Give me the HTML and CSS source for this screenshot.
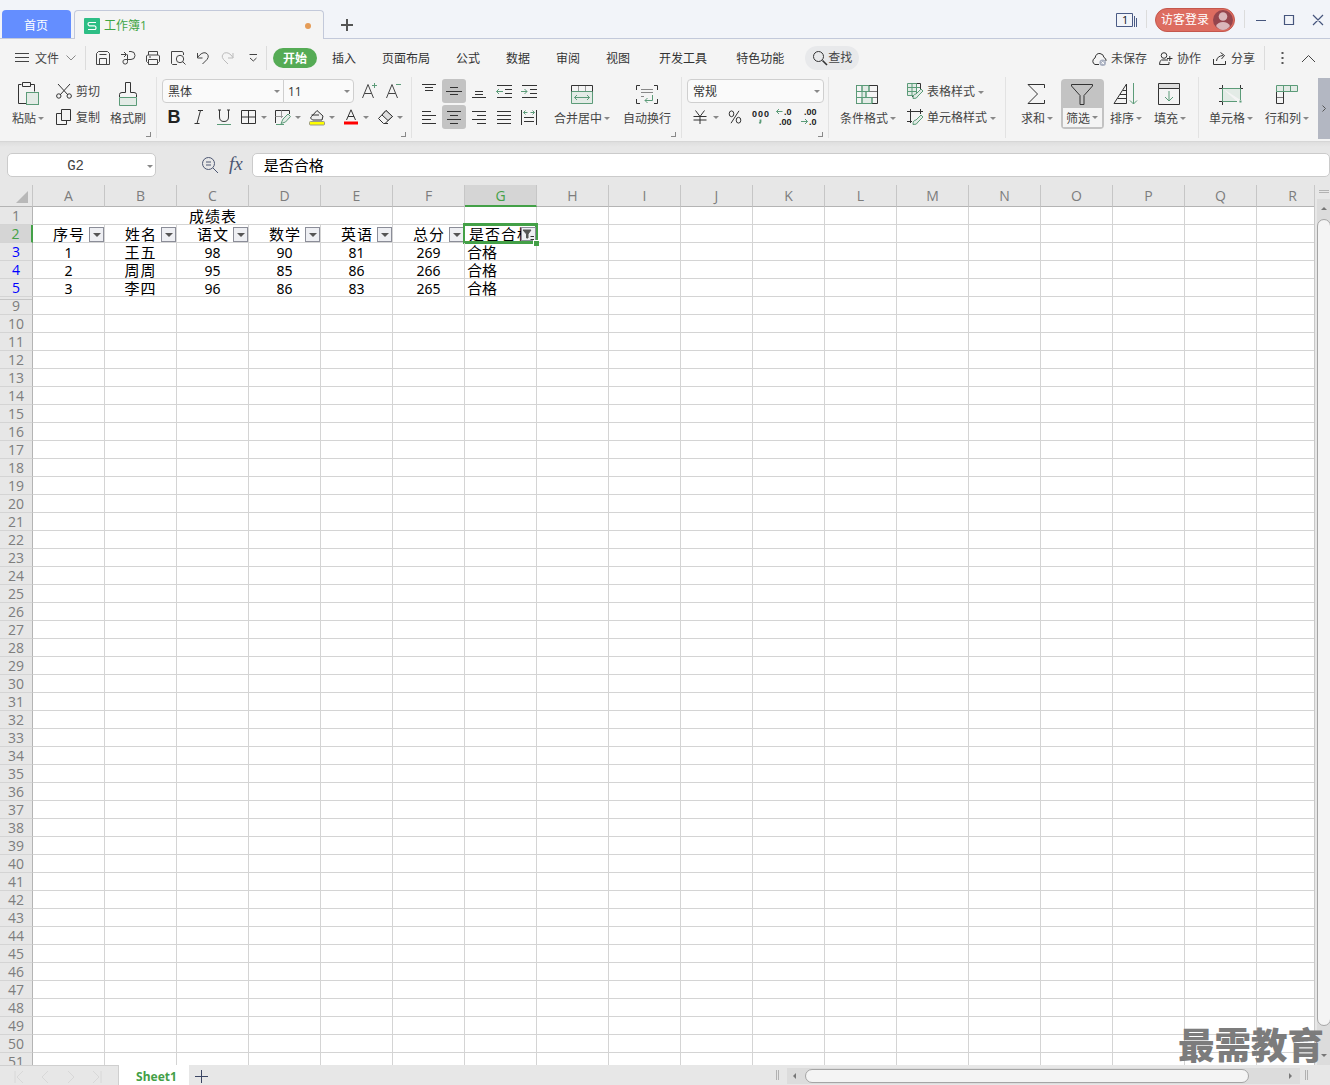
FILE: index.html
```html
<!DOCTYPE html>
<html lang="zh-CN">
<head>
  <meta charset="UTF-8" />
  <title>工作簿1</title>
  <meta name="viewport" content="width=device-width, initial-scale=1" />
  <link rel="stylesheet" href="styles.css">
</head>
<body>

<header class="titlebar">
  <div class="home-tab">首页</div>
  <div class="doc-tab">
    <svg width="16" height="16"><rect width="16" height="16" rx="1" fill="#2dbe85"/><path d="M12 4.5H5.5Q4 4.5 4 6T5.5 7.8H10.5Q12 7.8 12 9.7T10.5 11.5H4" stroke="#fff" stroke-width="1.2"/></svg>
    <span>工作簿1</span>
    <i class="unsaved"></i>
  </div>
  <svg class="new-tab" width="12" height="12"><path d="M6 0V12M0 6H12" stroke="#555" stroke-width="2"/></svg>
  <div class="window-tools">
    <svg class="win-count" width="22" height="14"><path d="M.5.5H16.500V13.500H.5ZM18.500 3V14M20.500 5V14" stroke="#4a5a85"/><text x="6" y="11" font-size="11">1</text></svg>
    <i class="sep short"></i>
    <div class="login">访客登录
      <svg width="20" height="20"><circle cx="10" cy="10" r="10" fill="#95454d"/><circle cx="10" cy="6.500" r="4.300" fill="#d9b6ba"/><path d="M3 16Q5 12 10 12T17 16Q14 20 10 20T3 16Z" fill="#d9b6ba"/></svg>
    </div>
    <i class="sep short"></i>
    <svg class="win-btns" width="68" height="12"><path d="M0 6.500H10M28.500 1.500H37.500V10.500H28.500ZM57 1L67 11M67 1L57 11" stroke="#46557d" stroke-width="1.200"/></svg>
  </div>
</header>

<nav class="menubar">
  <svg class="burger" width="14" height="10"><path d="M0 .5H14M0 4.500H14M0 8.500H14" stroke="#444"/></svg>
  <span class="file">文件</span>
  <svg width="10" height="6"><path d="M.5.5L5 5L9.500.5" stroke="#888"/></svg>
  <i class="sep"></i>
  <div class="quick">
    <svg width="16" height="16"><path d="M1.500 14.500V3.500L3.500 1.500H12.500L14.500 3.500V14.500ZM4.500 4.500H11.500M4.500 14.500V8.500H11.500V14.500"/></svg>
    <svg width="16" height="16"><path d="M1 4.500H6M4 2L6.500 4.500L4 7M9 1.500H11A3.800 3.800 0 0 1 11 9.500H7.500V4.500M7.500 9.500V11.500A2.300 2.300 0 1 1 5 9.500H7.500"/></svg>
    <svg width="16" height="16"><path d="M3.500 5V1.500H12.500V5M3.500 12.500H2.500L1.500 11.500V6L2.500 5H13.500L14.500 6V11.500L13.500 12.500H12.500M3.500 9.500H12.500V14.500H3.500ZM4 7H6"/></svg>
    <svg width="16" height="16"><path d="M7 14.500H2.500L1.500 13.500V1.500H12.500L13.500 3V5"/><circle cx="10" cy="9" r="3.700"/><path d="M12.500 11.500L15.500 14.500"/></svg>
    <svg width="16" height="16"><path d="M2.500 3V8H7.500M2.500 7.500Q7 1.500 11 3Q15 5.500 12 9.500L7.500 14"/></svg>
    <svg class="faded" width="16" height="16"><path d="M13 3V8H8M13 7.500Q9 1.500 4.500 3Q.5 5.500 3.500 9.500L8 14"/></svg>
    <svg width="16" height="16"><path d="M4.500 4.500H12M5 8L8.300 11L11.500 8"/></svg>
  </div>
  <i class="sep after-quick"></i>
  <div class="tabs">
    <span class="active">开始</span>
    <span>插入</span>
    <span>页面布局</span>
    <span>公式</span>
    <span>数据</span>
    <span>审阅</span>
    <span>视图</span>
    <span class="wide">开发工具</span>
    <span class="wide">特色功能</span>
  </div>
  <div class="search">
    <svg width="16" height="16"><circle cx="6.500" cy="6.500" r="5"/><path d="M10.500 10.500L15 15" stroke-width="1.600"/></svg>查找
  </div>
  <div class="share-tools">
    <span><svg width="16" height="16"><path d="M8 13.500H4A3.500 3.500 0 0 1 4 7Q5 2 9 2.500Q12.500 3 13 6.500Q15.500 7.500 15 10"/><circle cx="11.700" cy="11.700" r="3.300" fill="#a9b0c0" stroke="none"/><path d="M10.500 10.500L13 13M13 10.500L10.500 13" stroke="#fff"/></svg>未保存</span>
    <span><svg width="15" height="16"><circle cx="6" cy="4.500" r="2.800"/><path d="M10 9H3.500Q1.500 9.500 1.500 13.500H11V11M9 7.500H14.500M11.800 5V10"/></svg>协作</span>
    <span><svg width="15" height="16"><path d="M1.500 8V13.500H13.500V10M4.500 10Q5 5 11 4.500M8.500 1.500L12.500 4.500L9.500 8"/></svg>分享</span>
    <i class="sep"></i>
    <svg class="more" width="3" height="12"><path d="M.5 0H2.500V2H.5ZM.5 5H2.500V7H.5ZM.5 10H2.500V12H.5Z" fill="#555" stroke="none"/></svg>
    <svg width="15" height="9"><path d="M1 8L7.500 1.500L14 8" stroke="#444"/></svg>
  </div>
</nav>

<section class="ribbon">
  <div class="group clipboard">
    <div class="big">
      <svg width="22" height="24"><path d="M4.500 2.500H1.500V21.500H9M14 2.500H17.500V9.500M5.500.5H13.500V4.500H5.500Z"/><rect class="g f" x="9.500" y="10.500" width="12" height="12"/></svg>
      <span>粘贴<b class="caret"></b></span>
    </div>
    <div class="stack">
      <span><svg width="16" height="16"><path d="M2 1L12 12M14 1L4 12"/><circle cx="2.800" cy="13" r="2.200"/><circle cx="13.200" cy="13" r="2.200"/></svg>剪切</span>
      <span><svg width="16" height="16"><path d="M5.500.5H14.500V11.500H5.500ZM5.500 4.500H.5V15.500H10.500V11.500"/></svg>复制</span>
    </div>
    <div class="big">
      <svg width="20" height="24"><path class="g f" d="M1.500 15.500H18.500V23.500H1.500Z"/><path d="M1.500 15V12.500Q1.500 10.500 4 10.500H7.500V.5H12.500V10.500H16Q18.500 10.500 18.500 12.500V15"/></svg>
      <span>格式刷</span>
    </div>
    <i class="launcher"></i>
  </div>

  <div class="group font">
    <div class="line">
      <div class="select name">黑体<b class="caret"></b></div>
      <div class="select size">11<b class="caret"></b></div>
      <svg class="grow" width="17" height="18"><path d="M1.500 16L7 2.500L12.500 16M3.500 11.500H10.500" stroke="#444"/><path class="g" d="M13.500 1V6M11 3.500H16"/></svg>
      <svg class="shrink" width="17" height="18"><path d="M1.500 16L7 2.500L12.500 16M3.500 11.500H10.500" stroke="#444"/><path class="g" d="M11 2.500H16"/></svg>
    </div>
    <div class="line">
      <div class="tool bold">B</div>
      <div class="tool"><svg width="12" height="16"><path d="M5 1.500H10M7.500 1.500L4 14.500M1.500 14.500H6.500"/></svg></div>
      <div class="tool"><svg width="16" height="18"><path d="M3.500 2V9Q3.500 13.500 8 13.500T12.500 9V2M2 2H5M11 2H14"/><path class="g" d="M1 16.500H15"/></svg></div>
      <div class="drop"><svg width="16" height="16"><path d="M.5 1.500H14.500V14.500H.5ZM.5 8H14.500M7.500 1.500V14.500"/></svg><b class="caret"></b></div>
      <div class="drop"><svg width="16" height="16"><path d="M.5 14V1.500H14.500V5"/><path d="M.5 7.500H8M6.500 1.500V9" stroke="#999"/><path class="g f" d="M6 14.500L8 10L13 5L15.500 7.500L10.500 13Z"/><path class="g" d="M1 15.500H9"/></svg><b class="caret"></b></div>
      <div class="drop"><svg width="16" height="16"><path d="M2.500 7.500L8 1.500L14 7L13 11H3.500L1.500 9ZM2.500 6H10" fill="#eee"/><rect x=".5" y="12.500" width="15" height="3.500" rx="1" fill="#ff0" stroke="#998"/></svg><b class="caret"></b></div>
      <div class="drop"><svg width="16" height="16"><path d="M3.500 11L8 .8L12.500 11M5 7.500H11"/><path d="M1 12.500H15V15.500H1Z" fill="#f00" stroke="none"/></svg><b class="caret"></b></div>
      <div class="drop"><svg width="17" height="16"><path d="M1.500 9.500L9 1.500L15.500 7.500L8 14.500H6.500ZM8 14.500H11" /><path d="M5 6L9 1.500L15.500 7.500L11 11.500Z" fill="#ddd"/></svg><b class="caret"></b></div>
    </div>
    <i class="launcher"></i>
  </div>

  <div class="group align">
    <div class="rows">
      <div class="line">
        <div class="tool"><svg width="16" height="16"><path d="M1 1.500H15M4 4.500H12M4 7.500H12"/></svg></div>
        <div class="tool on"><svg width="16" height="16"><path d="M4 4.500H12M0 8.500H16M4 11.500H12"/></svg></div>
        <div class="tool"><svg width="16" height="16"><path d="M4 8.500H12M4 11.500H12M1 14.500H15"/></svg></div>
        <div class="tool"><svg width="16" height="16"><path d="M1 2.500H16M9 6.500H16M9 10.500H16M1 14.500H16"/><path class="g" d="M.5 8.500H7M3 6L.5 8.500L3 11"/></svg></div>
        <div class="tool"><svg width="16" height="16"><path d="M1 2.500H16M9 6.500H16M9 10.500H16M1 14.500H16"/><path class="g" d="M0 8.500H6M3.500 6L6 8.500L3.500 11"/></svg></div>
      </div>
      <div class="line">
        <div class="tool"><svg width="16" height="16"><path d="M1 2.500H10M1 6.500H15M1 10.500H10M1 14.500H15"/></svg></div>
        <div class="tool on"><svg width="16" height="16"><path d="M1 2.500H15M4 6.500H12M1 10.500H15M4 14.500H12" /></svg></div>
        <div class="tool"><svg width="16" height="16"><path d="M1 2.500H15M6 6.500H15M1 10.500H15M6 14.500H15"/></svg></div>
        <div class="tool"><svg width="16" height="16"><path d="M1 2.500H15M1 6.500H15M1 10.500H15M1 14.500H15"/></svg></div>
        <div class="tool"><svg width="16" height="16"><path d="M.5 1V16M15.500 1V16M3 8.500H13M3 12.500H13"/><path class="g" d="M2.500 3.500H6.500M4.500 1.500L2.500 3.500L4.500 5.500M9.500 3.500H13.500M11.500 1.500L13.500 3.500L11.500 5.500"/></svg></div>
      </div>
    </div>
    <div class="big merge">
      <svg width="22" height="24"><path class="g f" d="M.5 9.500H21.500V21.500H.5Z"/><path d="M.5 9.500V3.500H21.500V9.500"/><path d="M7.500 4V9M14.500 4V9" stroke="#999"/><path class="g" d="M3.500 15.500H18.500M6 13L3.500 15.500L6 18M16 13L18.500 15.500L16 18"/></svg>
      <span>合并居中<b class="caret"></b></span>
    </div>
    <div class="big wrap">
      <svg width="24" height="24"><path d="M5 3.500H1.500V8M19 3.500H22.500V8M1.500 17V21.500H5M22.500 17V21.500H19"/><path d="M6 7.500H18M6 10.500H18M6 14.500H9" stroke="#888"/><path class="g" d="M17.500 13V18.500H10M12.500 16L10 18.500L12.500 21"/></svg>
      <span>自动换行</span>
    </div>
    <i class="launcher"></i>
  </div>

  <div class="group number">
    <div class="line"><div class="select format">常规<b class="caret"></b></div></div>
    <div class="line">
      <div class="drop yen"><svg width="14" height="16"><path d="M2.500 1.500L7 7.500L11.500 1.500M.5 7.500H13.500M.5 11H13.500M7 7.500V15"/></svg><b class="caret"></b></div>
      <svg class="percent" width="14" height="14"><ellipse cx="3.500" cy="3.800" rx="2.300" ry="2.900"/><ellipse cx="10.500" cy="10.200" rx="2.300" ry="2.900"/><path d="M11 .8L3 13.200"/></svg>
      <svg class="thousand" width="18" height="16"><g class="num"><text x="0" y="8" textLength="17">000</text></g><path class="g" d="M8.500 10.500V13L7.500 14.500" stroke-width="1.800"/></svg>
      <svg class="dec" width="18" height="18"><g class="num"><text x="8" y="7">.0</text><text x="3" y="17">.00</text></g><path class="g" d="M.5 3.500H6.500M3 1L.5 3.500L3 6"/></svg>
      <svg class="dec" width="18" height="18"><g class="num"><text x="3" y="7">.00</text><text x="8" y="17">.0</text></g><path class="g" d="M0 13.500H6.500M4 11L6.500 13.500L4 16"/></svg>
    </div>
    <i class="launcher"></i>
  </div>

  <div class="group styles">
    <div class="big">
      <svg width="22" height="24"><path class="g f" d="M6 3.500H13V9.500H10V15.500H16V21.500H6Z"/><path d="M.5 3.500H21.500V21.500H.5Z"/><path class="g" d="M.5 21.500V3.500H13V9.500H.5M.5 15.500H16V21.500M6 3.500V9.500M10 9.500V15.500M6 15.500V21.500M.5 21.500H16"/><path d="M13 9.500H21M16 15.500H21" stroke="#777"/></svg>
      <span>条件格式<b class="caret"></b></span>
    </div>
    <div class="stack">
      <span><svg width="17" height="17"><path d="M8 .5H13.500V5M13.500 5V7M8 13.500H5"/><path class="g f" d="M.5.5H9.500V12.500H.5ZM.5 4.500H13M.5 8.500H10M5 .5V12.500M9.500.5V8"/><path class="g f" d="M6 15.500Q6 11 9 11L14 6L16 8L11 13Q10 16 6 15.500Z"/></svg>表格样式<b class="caret"></b></span>
      <span><svg width="17" height="17"><path d="M0 2.500H16M3.500 0V14M13.500 0V5M0 12.500H5"/><path class="g f" d="M6 15.500Q6 11 9 11L14 6L16 8L11 13Q10 16 6 15.500Z"/></svg>单元格样式<b class="caret"></b></span>
    </div>
  </div>

  <div class="group edit">
    <div class="big">
      <svg width="18" height="24"><path d="M17.500 6V2.500H1L10.500 12L1 21.500H17.500V18"/></svg>
      <span>求和<b class="caret"></b></span>
    </div>
    <div class="big pressed">
      <svg width="22" height="24"><path d="M.5 2.500H21.500V4L13 13.500V22.500H9V13.500L.5 4Z"/></svg>
      <span>筛选<b class="caret"></b></span>
    </div>
    <div class="big">
      <svg width="24" height="24"><path d="M1 21.500H13.500V2L1 21.500M10 8.500H13.500M7 12.500H13.500M4.500 16.500H13.500"/><path class="g" d="M20.500 1V22M17 18.500L20.500 22L24 18.500"/></svg>
      <span>排序<b class="caret"></b></span>
    </div>
    <div class="big fill">
      <svg width="22" height="24"><path d="M.5 1.500H21.500V6.500H.5Z" fill="#ddd"/><path d="M.5 6.500V22.500H21.500V6.500"/><path class="g" d="M11 9V19M7 15L11 19L15 15"/></svg>
      <span>填充<b class="caret"></b></span>
    </div>
  </div>

  <div class="group cells">
    <div class="big">
      <svg width="24" height="24"><path d="M0 6.500H24M3.500 3V23M21.500 3V14M0 19.500H4"/><path class="g f" d="M3.500 6.500H21.500V18M18 19.500H3.500V6.500"/><path class="g" d="M20.500 19.500H22.500" stroke-width="2"/></svg>
      <span>单元格<b class="caret"></b></span>
    </div>
    <div class="big">
      <svg width="22" height="24"><path d="M.5 9.500V21.500H7.500V9.500"/><path d="M1 15.500H7" stroke="#777"/><path class="g f" d="M.5 3.500H21.500V9.500H.5ZM7.500 3.500V9.500M14.500 3.500V9.500"/></svg>
      <span>行和列<b class="caret"></b></span>
    </div>
  </div>
  <div class="ribbon-next"><svg width="4" height="7"><path d="M.5.5L3.500 3.500L.5 6.500" stroke="#555"/></svg></div>
</section>

<section class="formula-bar">
  <div class="name-box">G2<b class="caret"></b></div>
  <svg class="lens" width="18" height="18"><circle cx="7.500" cy="7.500" r="6" stroke="#4c5672"/><path d="M12 12L17 17M5 6H10M5 9H10" stroke="#4c5672"/></svg>
  <span class="fx">fx</span>
  <div class="formula">是否合格</div>
</section>

<main class="sheet">
  <div class="grid" id="grid"></div>
  <div class="vscroll">
    <div class="split"></div>
    <div class="track">
      <i class="arrow up"></i>
      <div class="thumb"></div>
      <i class="arrow down"></i>
    </div>
  </div>
</main>

<footer class="bottom">
  <div class="sheet-nav">
    <svg width="90" height="14"><path d="M1 1V13M9 1L3 7L9 13M34 1L28 7L34 13M54 1L60 7L54 13M79 1L85 7L79 13M87 1V13" stroke="#d8d8d8"/></svg>
  </div>
  <div class="sheet-tab">Sheet1</div>
  <svg class="add-sheet" width="13" height="13"><path d="M6.500 0V13M0 6.500H13" stroke="#3b4663"/></svg>
  <div class="hscroll">
    <i class="grip"></i>
    <div class="htrack">
      <i class="arrow left"></i>
      <div class="hthumb"></div>
      <i class="arrow right"></i>
    </div>
    <i class="grip"></i>
  </div>
</footer>

<div class="watermark">最需教育</div>

<script src="grid.js"></script>
</body>
</html>
```
FILE: styles.css
```css
:root {
  --green: #43a047;
  --icon-green: #5b9b78;
  --bar: #f4f4f4;
  --gray: #e7e7e7;
  --line: #d4d4d4;
  --text: #444;
}

* {
  box-sizing: border-box;
}

body {
  margin: 0;
  width: 1330px;
  height: 1085px;
  overflow: hidden;
  display: flex;
  flex-direction: column;
  position: relative;
  font-family: "Open Sans", "Noto Sans CJK SC", sans-serif;
  font-size: 12px;
  line-height: 16px;
  color: var(--text);
  background: var(--gray);
}

svg {
  display: block;
  flex: none;
  fill: none;
  stroke: #333;
  overflow: visible;
}

svg text {
  fill: #222;
  stroke: none;
}

svg .g {
  stroke: var(--icon-green);
}

svg .f {
  fill: #e3ebe6;
}

.sep {
  width: 1px;
  height: 24px;
  background: #dcdcdc;
  flex: none;
}

.caret {
  display: inline-block;
  flex: none;
  border: 3px solid transparent;
  border-top-color: #888;
  border-bottom: 0;
}

/* title bar */
.titlebar {
  height: 39px;
  flex: none;
  display: flex;
  align-items: flex-end;
  background: #f2f4f9;
  box-shadow: inset 0 -1px #c3c9da;
}

.home-tab {
  width: 69px;
  height: 28px;
  margin: 0 3px 1px 2px;
  border-radius: 4px 4px 0 0;
  background: #648eff;
  color: #fff;
  line-height: 31px;
  text-align: center;
  padding-right: 1px;
}

.doc-tab {
  width: 250px;
  height: 29px;
  border: 1px solid #c3c9da;
  border-bottom: 0;
  border-radius: 4px 4px 0 0;
  background: var(--bar);
  display: flex;
  align-items: center;
  padding: 2px 12px 0 9px;
  color: #3fa544;
}

.doc-tab svg {
  stroke: none;
  margin-right: 4px;
}

.unsaved {
  width: 6px;
  height: 6px;
  border-radius: 50%;
  background: #e59c57;
  margin-left: auto;
}

.new-tab {
  margin: 0 0 8px 17px;
}

.window-tools {
  height: 38px;
  margin-left: auto;
  display: flex;
  align-items: center;
  padding: 0 6px 1px 0;
}

.win-count {
  margin-right: -1px;
}

.win-count text {
  fill: #111;
}

.sep.short {
  height: 18px;
  margin: 0 8px 2px 9px;
}

.login {
  width: 80px;
  height: 24px;
  border: 1px solid #c4574d;
  border-radius: 12px;
  background: #dd6c60;
  color: #fff;
  display: flex;
  align-items: center;
  justify-content: space-between;
  padding: 0 1px 0 5px;
}

.login svg {
  stroke: none;
}

.win-btns {
  margin: 1px 0 0 3px;
}

/* menu */
.menubar {
  height: 38px;
  flex: none;
  display: flex;
  align-items: center;
  background: var(--bar);
  padding-left: 15px;
}

.file {
  margin: 1px 7px 0 6px;
}

.menubar .sep {
  margin-left: 9px;
}

.quick {
  display: flex;
  gap: 9px;
  margin-left: 9px;
}

.quick svg {
  stroke: #444;
}

.quick .faded {
  stroke: #bbb;
}

.menubar .after-quick {
  margin-left: 5px;
}

.tabs {
  display: flex;
  align-items: center;
  gap: 26px;
  margin-left: 6px;
  color: #333;
}

.tabs span {
  padding-top: 2px;
}

.tabs .active {
  width: 44px;
  height: 20px;
  line-height: 20px;
  border-radius: 10px;
  background: #55ab55;
  color: #fff;
  font-weight: bold;
  text-align: center;
  margin-right: -11px;
  padding-top: 1px;
}

.tabs .wide {
  margin-left: 3px;
}

.search {
  width: 54px;
  height: 24px;
  border-radius: 12px;
  background: #e8e9eb;
  display: flex;
  align-items: center;
  padding-left: 8px;
  margin-left: 21px;
}

.search svg {
  margin: 0 0 0 -1px;
}

.share-tools {
  margin-left: auto;
  display: flex;
  align-items: center;
  padding-right: 14px;
}

.share-tools span {
  display: flex;
  align-items: center;
  gap: 4px;
  margin: 1px 11px 0 0;
}

.share-tools .sep {
  margin-left: -2px;
}

.share-tools .more {
  margin: 0 17px 0 16px;
}

/* ribbon */
.ribbon {
  height: 65px;
  flex: none;
  display: flex;
  background: var(--bar);
  border-bottom: 1px solid #d6d6d6;
}

.group {
  height: 61px;
  border-right: 1px solid #e2e2e2;
  position: relative;
  padding-top: 2px;
  flex: none;
}

.launcher {
  position: absolute;
  right: 5px;
  bottom: 1px;
  width: 5px;
  height: 5px;
  border: solid #888;
  border-width: 0 1px 1px 0;
}

.big {
  display: flex;
  flex-direction: column;
  align-items: center;
  padding-top: 3px;
}

.big span {
  display: flex;
  align-items: center;
  gap: 2px;
  margin-top: 5px;
  white-space: nowrap;
}

.big .caret {
  margin-top: -2px;
}

.stack {
  display: flex;
  flex-direction: column;
  gap: 2px;
  padding-top: 1px;
}

.stack span {
  height: 24px;
  display: flex;
  align-items: center;
  gap: 4px;
  white-space: nowrap;
}

.stack svg {
  margin-top: -2px;
}

.line {
  display: flex;
  align-items: center;
  height: 24px;
  margin-bottom: 2px;
}

.select {
  height: 24px;
  border: 1px solid #cfcfcf;
  border-radius: 4px;
  background: #fafafa;
  display: flex;
  align-items: center;
  justify-content: space-between;
  padding: 1px 3px 0 5px;
  color: #333;
}

.tool {
  width: 24px;
  height: 24px;
  margin-right: 1px;
  border-radius: 3px;
  display: flex;
  align-items: center;
  justify-content: center;
}

.tool.on {
  background: #c3c3c3;
}

.tool.bold {
  font: bold 18px "Liberation Sans", sans-serif;
  color: #222;
}

.drop {
  display: flex;
  align-items: center;
  gap: 4px;
  width: 26px;
  margin-right: 8px;
}

.drop svg {
  width: 16px;
}

.clipboard,
.styles,
.edit,
.cells {
  display: flex;
}

.clipboard {
  width: 157px;
  padding-left: 12px;
  gap: 12px;
}

.clipboard .stack {
  margin-right: -2px;
}

.font {
  width: 255px;
  padding-left: 5px;
}

.select.name {
  width: 122px;
  border-radius: 4px 0 0 4px;
}

.select.size {
  width: 71px;
  margin-left: -1px;
  border-radius: 0 4px 4px 0;
  padding-left: 4px;
}

.grow {
  margin: 0 7px 0 7px;
}

.font .bold + .tool + .tool {
  margin-right: 5px;
}

.align {
  width: 270px;
  display: flex;
  padding-left: 5px;
}

.merge {
  margin-left: 12px;
}

.wrap {
  margin-left: 13px;
}

.number {
  width: 147px;
  padding-left: 5px;
}

.select.format {
  width: 137px;
}

.number .drop {
  margin: 0 9px 0 6px;
}

.num {
  font: bold 9px "Liberation Sans", sans-serif;
}

.thousand {
  margin: 0 6px 0 10px;
}

.dec {
  margin-right: 7px;
}

.styles {
  width: 177px;
  padding-left: 11px;
  gap: 11px;
}

.styles .big svg,
.edit .big svg {
  margin-right: 2px;
}

.styles .stack span {
  gap: 3px;
}

.edit {
  width: 193px;
  padding-left: 15px;
}

.pressed {
  width: 43px;
  height: 50px;
  margin: 0 6px 0 8px;
  padding-top: 3px;
  background: #c3c3c3;
  border-radius: 4px;
}

.pressed span {
  width: 39px;
  height: 19px;
  margin-top: 2px;
  padding: 2px 0 0 3px;
  background: var(--bar);
}

.fill {
  margin-left: 12px;
}

.cells {
  width: 119px;
  padding-left: 10px;
  gap: 12px;
  border: 0;
}

.ribbon-next {
  width: 12px;
  height: 61px;
  margin-top: 1px;
  background: #b3b7c2;
  display: flex;
  align-items: center;
  justify-content: center;
}

/* formula bar */
.formula-bar {
  height: 43px;
  flex: none;
  display: flex;
  align-items: center;
  padding: 3px 0 0 7px;
  background: linear-gradient(#dedede, var(--gray) 5px);
}

.name-box,
.formula {
  height: 24px;
  border: 1px solid #cbcbcb;
  border-radius: 5px;
  background: #fff;
  color: #000;
}

.name-box {
  width: 149px;
  display: flex;
  align-items: center;
  justify-content: flex-end;
  padding: 2px 2px 0 0;
  font: 14px "Liberation Mono", monospace;
  color: #444;
}

.name-box .caret {
  margin-left: 63px;
}

.lens {
  margin-left: 45px;
}

.fx {
  margin: 0 9px 2px 10px;
  font: italic 19px "Liberation Serif", serif;
  color: #4c5672;
}

.formula {
  flex: 1;
  padding-left: 11px;
  font-size: 15px;
  line-height: 22px;
}

/* sheet */
.sheet {
  height: 880px;
  flex: none;
  display: flex;
}

.grid {
  width: 1315px;
  overflow: hidden;
  background: #fff;
  border-right: 1px solid #c8c8c8;
}

.row {
  display: flex;
  width: 1329px;
  height: 18px;
}

.row.head {
  height: 22px;
}

.cell,
.row-no,
.col-name {
  flex: none;
  width: 72px;
  border-right: 1px solid var(--line);
  border-bottom: 1px solid var(--line);
}

.cell {
  position: relative;
  font-size: 15px;
  line-height: 19px;
  letter-spacing: 1px;
  color: #000;
  text-align: center;
  white-space: nowrap;
}

.cell.num-cell {
  font-family: "Noto Sans", sans-serif;
  font-size: 14px;
  letter-spacing: 0;
}

.cell.left {
  text-align: left;
  padding-left: 2px;
  letter-spacing: 0;
}

.cell.merged {
  width: 360px;
  padding-left: 1px;
}

.col-name,
.row-no {
  background: var(--gray);
  color: #7d7d7d;
  font-size: 14px;
  text-align: center;
}

.col-name {
  line-height: 22px;
  border-bottom-color: #b4b4b4;
  border-right-color: #c6c6c6;
}

.col-name.picked {
  background: #d5d5d5;
  color: var(--green);
  border-bottom: 2px solid var(--green);
}

.row-no {
  width: 33px;
  line-height: 18px;
  border-right-color: #b4b4b4;
}

.row-no.filtered {
  color: #00f;
}

.row-no.picked {
  background: #d5d5d5;
  color: var(--green);
  border-right: 2px solid var(--green);
}

/* second rule marks the hidden rows above */
.row-no.after-hidden {
  background: linear-gradient(var(--gray) 2px, #c6c6c6 2px 3px, var(--gray) 3px);
}

.corner {
  width: 33px;
  flex: none;
  background: var(--gray);
  border-right: 1px solid #c6c6c6;
  border-bottom: 1px solid #b4b4b4;
  display: flex;
  justify-content: flex-end;
  align-items: flex-end;
  padding: 0 4px 3px 0;
}

.corner i {
  border: 6px solid;
  border-color: transparent #b8b8b8 #b8b8b8 transparent;
}

.filter {
  position: absolute;
  right: 0;
  top: 2px;
  width: 15px;
  height: 15px;
  border: 1px solid #8b8d98;
  background: #eeeff3;
  display: flex;
  align-items: center;
  justify-content: center;
}

.filter .caret {
  border-width: 4px 4px 0;
  border-top-color: #555;
}

.cell.has-filter {
  text-align: left;
  padding-left: 20px;
}

.cell.selected {
  padding-left: 4px;
}

.cell.selected::after {
  content: "";
  box-sizing: border-box;
  position: absolute;
  left: -2px;
  top: -2px;
  width: 75px;
  height: 21px;
  border: 3px solid var(--green);
  border-left-width: 2px;
}

.selected .filter {
  z-index: 1;
  height: 14px;
}

.handle {
  position: absolute;
  right: -3px;
  bottom: -4px;
  width: 6px;
  height: 6px;
  background: var(--green);
  border: solid #fff;
  border-width: 1px 0 0 1px;
  z-index: 2;
}

.arrow {
  border: 3px solid transparent;
  flex: none;
}

.up {
  border-bottom-color: #777;
  border-top: 0;
}

.down {
  border-top-color: #777;
  border-bottom: 0;
}

.left.arrow {
  border-right-color: #777;
  border-left: 0;
}

.right.arrow {
  border-left-color: #777;
  border-right: 0;
}

.vscroll {
  width: 15px;
  display: flex;
  flex-direction: column;
}

.split {
  height: 3px;
  margin: 5px 1px 6px 4px;
  border: solid #b2b2b2;
  border-width: 1px 0;
}

.track {
  flex: 1;
  margin-left: 2px;
  background: #dcdcdc;
  display: flex;
  flex-direction: column;
  align-items: center;
  padding: 8px 0 8px;
}

.thumb {
  width: 14px;
  height: 807px;
  margin: 9px 0 auto;
  border: 1px solid #a5a5a5;
  border-radius: 7px;
  background: #f4f4f4;
}

/* bottom bar */
.bottom {
  height: 20px;
  flex: none;
  display: flex;
  align-items: center;
  background: var(--gray);
}

.sheet-nav {
  width: 119px;
  height: 20px;
  padding: 4px 0 0 14px;
  border: solid #cfcfcf;
  border-width: 1px 1px 0 0;
}

.sheet-tab {
  width: 70px;
  height: 20px;
  background: #fff;
  color: var(--green);
  font: bold 12px/23px "Noto Sans", sans-serif;
  text-align: center;
  padding-left: 5px;
}

.add-sheet {
  margin: 3px 0 0 6px;
}

.hscroll {
  display: flex;
  align-items: center;
  margin-left: auto;
  padding-right: 22px;
  height: 20px;
}

.grip {
  width: 3px;
  height: 10px;
  border: solid #b2b2b2;
  border-width: 0 1px;
}

.htrack {
  width: 513px;
  height: 16px;
  margin: 2px 5px 0 8px;
  background: #dcdcdc;
  display: flex;
  align-items: center;
  padding: 0 8px 0 6px;
}

.hthumb {
  width: 444px;
  height: 14px;
  margin: 0 auto 0 9px;
  border: 1px solid #a5a5a5;
  border-radius: 7px;
  background: #f4f4f4;
}

.watermark {
  position: absolute;
  left: 1178px;
  top: 1020px;
  font: 900 36.5px/48px "Noto Sans CJK SC", sans-serif;
  color: #7c7c7c;
}
```
FILE: grid.js
```js
const columns = "ABCDEFGHIJKLMNOPQR".split("");
const grid = document.getElementById("grid");

const data = {
  2: ["序号", "姓名", "语文", "数学", "英语", "总分", "是否合格"],
  3: ["1", "王五", "98", "90", "81", "269", "合格"],
  4: ["2", "周周", "95", "85", "86", "266", "合格"],
  5: ["3", "李四", "96", "86", "83", "265", "合格"]
};

function add(parent, className, text = "") {
  const el = document.createElement("div");
  el.className = className;
  el.textContent = text;
  parent.appendChild(el);
  return el;
}

// column letters
const head = add(grid, "row head");
add(head, "corner").innerHTML = "<i></i>";
columns.forEach(c => add(head, c === "G" ? "col-name picked" : "col-name", c));

for (let n = 1; n <= 51; n++) {
  if (n >= 6 && n <= 8) continue; // filtered out
  const row = add(grid, "row");
  let noClass = "row-no";
  if (n === 2) noClass += " picked";
  if (n >= 3 && n <= 5) noClass += " filtered";
  if (n === 9) noClass += " after-hidden";
  add(row, noClass, n);

  columns.forEach((c, i) => {
    if (n === 1 && i < 5) {
      if (i === 0) add(row, "cell merged", "成绩表");
      return;
    }
    const value = data[n] && data[n][i] || "";
    const cell = add(row, "cell", value);
    if (/^\d+$/.test(value)) cell.classList.add("num-cell");
    if (i === 6 && n > 2) cell.classList.add("left");
    if (n === 2 && value) {
      cell.classList.add("has-filter");
      const btn = add(cell, "filter");
      btn.innerHTML = '<b class="caret"></b>';
      if (c === "G") {
        cell.classList.add("selected");
        btn.innerHTML = '<svg width="13" height="13"><path d="M1 2H9L6 6V10H4.500V6Z" fill="#555" stroke="#555"/><path d="M8.500 8.500H12M8.500 11.500H12"/></svg>';
        add(cell, "handle");
      }
    }
  });
}
```
